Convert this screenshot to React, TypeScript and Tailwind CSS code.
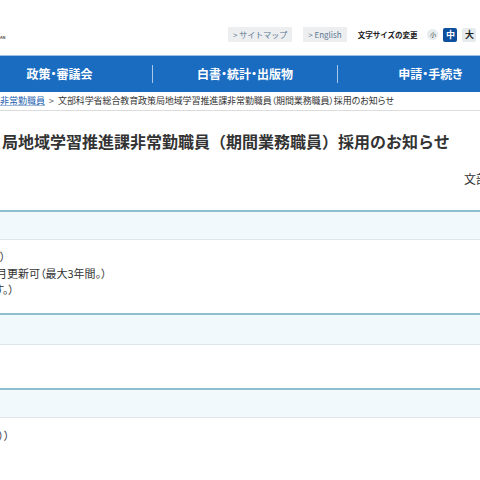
export default function App() {
    return (
        <div className="w-[480px] h-[480px] overflow-hidden bg-white text-[#333] font-['Noto_Sans_CJK_JP','Noto_Sans',sans-serif]">
            {/* Header */}
            <div className="h-[55px] flex items-start whitespace-nowrap">
                <div className="pt-[35px] text-[4px] font-bold text-[#555] leading-none w-[228px] shrink-0">AN</div>
                <div className="pt-[27px] flex items-center gap-[11px] shrink-0">
                    <span className="h-[15px] px-[5px] flex items-center bg-[#eceef0] text-[8px] text-[#5a7690]">&gt; サイトマップ</span>
                    <span className="h-[15px] px-[5px] flex items-center bg-[#eceef0] text-[8px] text-[#5a7690]">&gt; English</span>
                    <span className="text-[7.5px] font-bold text-[#222]">文字サイズの変更</span>
                    <div className="flex items-center gap-[5px] -ml-[1px]">
                        <span className="w-[11px] h-[11px] rounded-full bg-[#e6ebee] text-[6px] flex items-center justify-center text-[#333]">小</span>
                        <span className="w-[14px] h-[14px] rounded-[2px] bg-[#0c4f9c] text-[9px] font-bold text-white flex items-center justify-center">中</span>
                        <span className="w-[14px] h-[14px] rounded-[2px] bg-[#e6ebee] text-[9px] font-bold text-[#222] flex items-center justify-center">大</span>
                    </div>
                </div>
            </div>

            {/* Global nav */}
            <div className="h-[37px] border-t border-[#9cc3e6] bg-[#1a6cc1] flex items-center -ml-[33px] whitespace-nowrap [font-feature-settings:'palt']">
                <div className="w-[185px] shrink-0 text-center text-white font-bold text-[12px]">政策・審議会</div>
                <div className="w-px h-[18px] bg-[#a8c8ea] shrink-0" />
                <div className="w-[184px] shrink-0 text-center text-white font-bold text-[12px]">白書・統計・出版物</div>
                <div className="w-px h-[18px] bg-[#a8c8ea] shrink-0" />
                <div className="w-[185px] shrink-0 text-center text-white font-bold text-[12px]">申請・手続き</div>
            </div>

            {/* Breadcrumb */}
            <div className="h-[19px] border-b border-[#dcdcdc] flex items-center text-[9px] whitespace-nowrap">
                <span className="text-[#1c5fb0] underline decoration-[#9bb8da]">非常勤職員</span>
                <span className="mx-[4px] text-[#555]">&gt;</span>
                <span className="text-[#333] tracking-[-0.1px] [font-feature-settings:'palt']">文部科学省総合教育政策局地域学習推進課非常勤職員（期間業務職員）採用のお知らせ</span>
            </div>

            {/* Title */}
            <h1 className="mt-[20px] pl-[2px] text-[16px] font-bold leading-[20px] whitespace-nowrap text-[#333]">
                局地域学習推進課非常勤職員（期間業務職員）採用のお知らせ
            </h1>
            <div className="mt-[20px] pl-[464px] text-[12px] leading-[16px] whitespace-nowrap text-[#333]">文部科学省</div>

            {/* Table */}
            <div className="mt-[23px]">
                <div className="h-[30px] border-t-2 border-b border-t-[#8dbfce] border-b-[#dfe6ea] bg-[#f2f9fc]" />
                <div className="h-[73px] pt-[8px] text-[11px] leading-[16.5px] whitespace-nowrap text-[#333] [font-feature-settings:'palt']">
                    <p>）</p>
                    <p className="-ml-[4px]">月更新可（最大3年間。）</p>
                    <p className="-ml-[6px]">す。）</p>
                </div>
                <div className="h-[32px] border-t-2 border-b border-t-[#8dbfce] border-b-[#dfe6ea] bg-[#f2f9fc]" />
                <div className="h-[43px]" />
                <div className="h-[30px] border-t-2 border-b border-t-[#8dbfce] border-b-[#dfe6ea] bg-[#f2f9fc]" />
                <div className="pt-[9px] text-[11px] leading-[16.5px] whitespace-nowrap text-[#333]">
                    <p className="-ml-[2px]">））</p>
                </div>
            </div>
        </div>
    );
}
